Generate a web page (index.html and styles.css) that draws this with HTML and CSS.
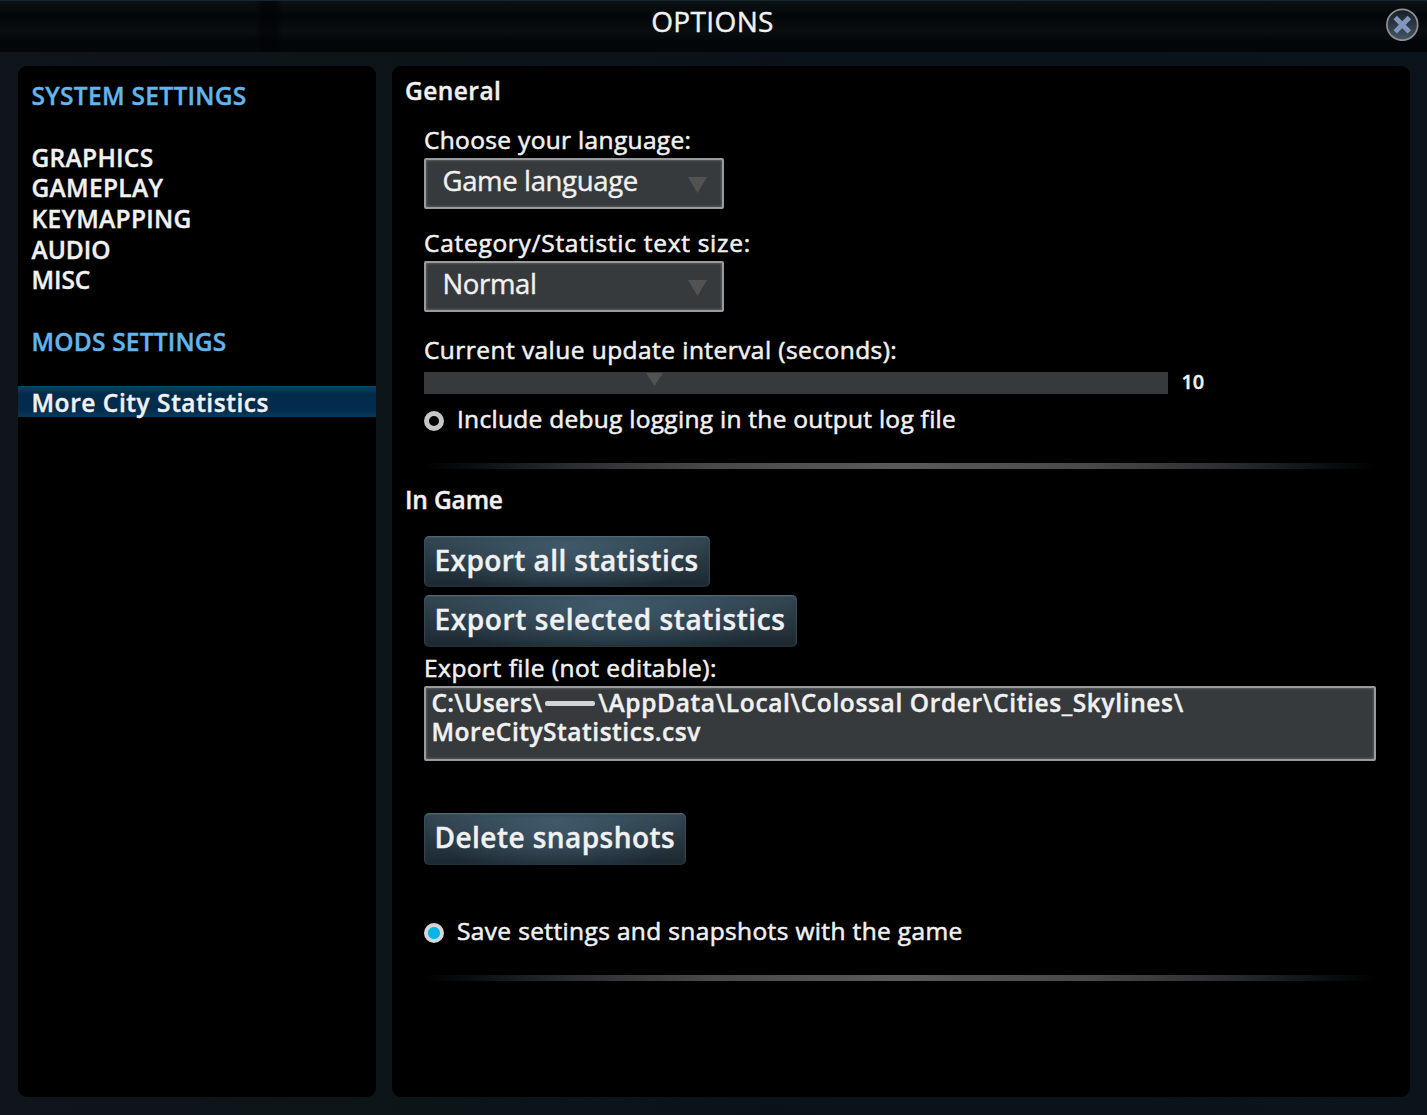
FILE: index.html
```html
<!DOCTYPE html>
<html lang="en">
<head>
<meta charset="utf-8">
<title>Options</title>
<link rel="stylesheet" href="styles.css">
</head>
<body>
<div class="window">
  <header class="titlebar">
    <h1 class="title">OPTIONS</h1>
    <button class="close" aria-label="Close">
      <svg width="34" height="34" viewBox="0 0 34 34">
        <defs><linearGradient id="disc" x1="0" y1="0" x2="0" y2="1"><stop offset="0" stop-color="#161d26"/><stop offset="1" stop-color="#465565"/></linearGradient></defs>
        <circle cx="17.3" cy="17.8" r="15.4" fill="url(#disc)" stroke="#8f9193" stroke-width="1.7"/>
        <path d="M11.9 12.2 L22.7 23.2 M22.7 12.2 L11.9 23.2" stroke="#8097bb" stroke-width="4.8" stroke-linecap="square" fill="none"/>
      </svg>
    </button>
  </header>
  <div class="columns">
    <nav class="panel sidebar">
      <h2 class="group">SYSTEM SETTINGS</h2>
      <ul class="items">
        <li>GRAPHICS</li>
        <li>GAMEPLAY</li>
        <li>KEYMAPPING</li>
        <li class="tight">AUDIO</li>
        <li class="tight">MISC</li>
      </ul>
      <h2 class="group mods">MODS SETTINGS</h2>
      <ul class="items">
        <li class="selected">More City Statistics</li>
      </ul>
    </nav>
    <main class="panel content">
      <h2 class="section general">General</h2>
      <div class="fields">
        <div class="label language-label">Choose your language:</div>
        <div class="select"><span>Game language</span><i class="arrow"></i></div>
        <div class="label size-label">Category/Statistic text size:</div>
        <div class="select"><span>Normal</span><i class="arrow"></i></div>
        <div class="label interval-label">Current value update interval (seconds):</div>
        <div class="slider-row"><div class="slider"><i class="thumb"></i></div><span class="value">10</span></div>
        <div class="check"><i class="radio"></i><span>Include debug logging in the output log file</span></div>
      </div>
      <div class="divider"></div>
      <h2 class="section game">In Game</h2>
      <div class="fields">
        <button class="button all">Export all statistics</button>
        <button class="button chosen">Export selected statistics</button>
        <div class="label file-label">Export file (not editable):</div>
        <div class="textfield"><span class="drive">C:\Users\</span><i class="redacted"></i><span class="path">\AppData\Local\Colossal Order\Cities_Skylines\</span><br><span class="file">MoreCityStatistics.csv</span></div>
        <button class="button delete">Delete snapshots</button>
        <div class="check save"><i class="radio on"></i><span>Save settings and snapshots with the game</span></div>
      </div>
      <div class="divider"></div>
    </main>
  </div>
</div>
</body>
</html>
```
FILE: styles.css
```css
* { box-sizing: border-box; }
body { margin: 0; background: #0b1218; color: #f1f1f1; font: 600 24.5px/31px "Open Sans", "Noto Sans", sans-serif; -webkit-text-stroke: 0.4px; }
h1, h2, ul { margin: 0; padding: 0; font: inherit; list-style: none; }
button { border: 0; padding: 0; margin: 0; background: none; color: inherit; font: inherit; display: block; -webkit-text-stroke: inherit; }

.window { height: 1115px; overflow: hidden; display: flex; flex-direction: column; border-top: 1px solid #16262f; background: linear-gradient(90deg, #0f151a, #0d1418 30%, #0a121a 60%, #0b141a); }
.titlebar { height: 51px; position: relative; background: linear-gradient(90deg, transparent 255px, rgba(0, 2, 6, 0.6) 262px 276px, transparent 283px), linear-gradient(#0c1215, #030607 30%, #0b0e10 58%, #030608 80%, #03070a); }
.title { text-align: center; font-size: 28px; font-weight: 400; line-height: 40px; letter-spacing: 0.35px; padding-right: 2px; }
.close { position: absolute; left: 1385px; top: 6px; width: 34px; height: 34px; }
.close svg { display: block; }

.columns { display: flex; gap: 16px; padding: 14px 17px 0 18px; }
.panel { height: 1031px; border-radius: 9px; background: #000; }
.sidebar { width: 358px; padding-top: 13.3px; line-height: 27.67px; letter-spacing: 0.3px; }
.group { height: 30.67px; color: #62b5ed; padding: 3px 0 0 13.5px; margin-bottom: 30.67px; }
.mods { letter-spacing: 0.2px; }
.items { margin-bottom: 30.67px; }
.items li { height: 30.67px; padding: 3px 0 0 13.5px; }
.items .tight { letter-spacing: -0.05px; }
.items .selected { letter-spacing: 0.55px; background: linear-gradient(#07466b, #022b4c 25%, #022b4c 75%, #07395b); }

.content { flex: 1; padding-top: 9px; }
.section { padding-left: 13px; }
.general { letter-spacing: 0.45px; }
.game { margin-top: 16px; line-height: 30px; padding-bottom: 1px; letter-spacing: -0.15px; }
.fields { margin-left: 32px; }
.label, .check { font-weight: 400; -webkit-text-stroke-width: 0.55px; }
.language-label { margin-top: 18px; letter-spacing: 0.33px; }
.size-label { margin-top: 18px; letter-spacing: 0.71px; }
.interval-label { margin-top: 22px; letter-spacing: 0.44px; }
.file-label { margin-top: 5px; letter-spacing: 0.48px; }

.select, .textfield { background: #363a3c; border: 2px solid #989b9d; border-radius: 2px; box-shadow: inset 0 0 3px #747a7d; }
.select { width: 300px; height: 51px; margin-top: 3px; padding: 0 15px 0 16.5px; display: flex; justify-content: space-between; font-size: 27.5px; font-weight: 400; line-height: 41px; letter-spacing: -0.35px; }
.arrow { width: 19px; height: 16px; margin-top: 17px; background: #525252; clip-path: polygon(0 0, 100% 0, 50% 100%); }

.slider-row { display: flex; height: 22px; margin-top: 7px; gap: 13.5px; }
.slider { width: 744px; height: 22px; background: #363a3c; padding-left: 222px; }
.thumb { display: block; width: 17px; height: 13px; margin-top: 1px; background: #525252; clip-path: polygon(0 0, 100% 0, 50% 100%); }
.value { font-size: 20px; line-height: 19px; letter-spacing: -0.3px; }

.check { display: flex; align-items: center; margin-top: 9px; height: 31px; letter-spacing: 0.28px; }
.radio { width: 20px; height: 20px; margin: 4px 13px 0 0; border: 5px solid #c6c6c6; border-radius: 50%; }
.radio.on { border: 0; background: radial-gradient(circle, #08b4ea 5.6px, #d6d6d6 6.4px); }

.divider { height: 6px; margin: 29px 34px 0 32px; background: linear-gradient(90deg, transparent, #0c1115 6%, #2c2e31 16%, #484848 30%, #5a5a5a 50%, #484848 70%, #2c2e31 84%, #0c1115 94%, transparent); }

.button { height: 51px; padding-left: 10.5px; text-align: left; border-radius: 5px; font-size: 28px; line-height: 46px; padding-bottom: 4px; background: radial-gradient(ellipse 50% 100% at 50% 20%, #3f596a, transparent), linear-gradient(#344853, #1c2831); box-shadow: inset 0 1px 2px #5c7684, inset 0 0 4px #25343e; }
.all { width: 286px; margin-top: 20px; letter-spacing: 0.43px; }
.chosen { width: 373px; height: 52px; margin-top: 8px; letter-spacing: 0.6px; }
.delete { width: 262px; height: 52px; margin-top: 52px; letter-spacing: 0.45px; }

.textfield { width: 952px; height: 75px; margin-top: 3px; padding: 0 5.5px; line-height: 29.4px; white-space: nowrap; }
.drive { letter-spacing: 0.3px; }
.path { letter-spacing: 0.63px; }
.file { letter-spacing: 0.53px; }
.redacted { display: inline-block; width: 50px; height: 5px; margin: 0 3.5px 0 2.5px; background: #d2d4d5; border-radius: 2px; vertical-align: 6px; }
.save { margin-top: 50px; letter-spacing: 0.36px; }
```
